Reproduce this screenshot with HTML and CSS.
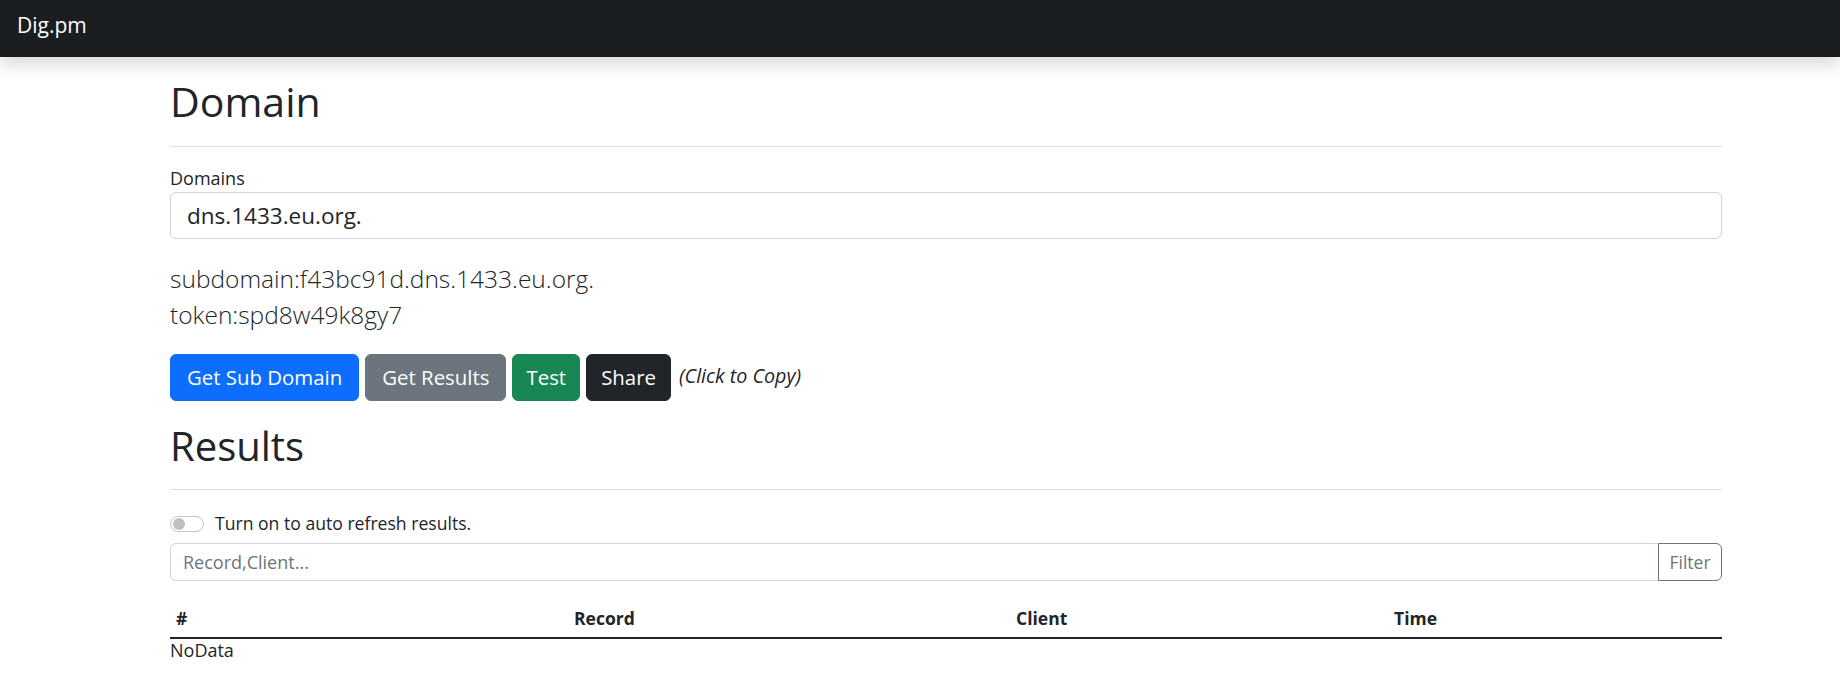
FILE: index.html
```html
<!DOCTYPE html>
<html lang="en">
<head>
<meta charset="utf-8">
<title>Dig.pm</title>
<link rel="stylesheet" href="styles.css">
</head>
<body>
<nav class="navbar"><span class="brand">Dig.pm</span></nav>
<main class="container">
  <h1 class="title">Domain</h1>
  <hr class="rule rule-domain">
  <label class="field-label" for="domains">Domains</label>
  <input class="domain-input" id="domains" type="text" value="dns.1433.eu.org.">
  <div class="lead">subdomain:f43bc91d.dns.1433.eu.org.<br>token:spd8w49k8gy7</div>
  <div class="actions">
    <button class="btn btn-primary">Get Sub Domain</button>
    <button class="btn btn-secondary">Get Results</button>
    <button class="btn btn-success btn-narrow">Test</button>
    <button class="btn btn-dark btn-share">Share</button>
    <span class="copy-hint">(Click to Copy)</span>
  </div>
  <h1 class="title title-results">Results</h1>
  <hr class="rule rule-results">
  <div class="switch-row">
    <span class="switch"><span class="knob"></span></span>
    <label class="switch-label">Turn on to auto refresh results.</label>
  </div>
  <div class="filter-group">
    <input class="filter-input" type="text" placeholder="Record,Client...">
    <button class="filter-btn">Filter</button>
  </div>
  <table class="results">
    <thead>
      <tr>
        <th class="col-num">#</th>
        <th class="col-record">Record</th>
        <th class="col-client">Client</th>
        <th class="col-time">Time</th>
      </tr>
    </thead>
  </table>
  <div class="nodata">NoData</div>
</main>
</body>
</html>
```
FILE: styles.css
```css
* { box-sizing: border-box; }
html, body { margin: 0; padding: 0; }
body {
  font-family: "Open Sans", "Noto Sans", sans-serif;
  font-size: 16px;
  line-height: 24px;
  color: #212529;
  background: #fff;
}
.navbar {
  height: 57px;
  background: #1b1e21;
  padding: 10px 0 0 17px;
  box-shadow: 0 8px 16px rgba(0,0,0,0.15);
  position: relative;
}
.brand {
  color: #fff;
  font-size: 21px;
  line-height: 30px;
  display: inline-block;
}
.container {
  width: 1552px;
  margin: 0 0 0 170px;
  padding-top: 20px;
}
.title {
  margin: 0;
  font-size: 41px;
  line-height: 48px;
  font-weight: 400;
}
.title-results { margin-top: 21px; font-size: 40px; }
.rule {
  border: 0;
  border-top: 1px solid #dfdfdf;
  margin: 21px 0 0;
}
.rule-results { margin-top: 19px; }
.field-label {
  display: block;
  margin-top: 19px;
  font-size: 18px;
  line-height: 24px;
}
.domain-input {
  display: block;
  width: 100%;
  margin-top: 2px;
  height: 47px;
  padding: 7px 16px;
  font: inherit;
  font-size: 22.5px;
  line-height: 30px;
  color: #212529;
  border: 1px solid #ced4da;
  border-radius: 6px;
  outline: none;
}
.lead {
  margin-top: 22px;
  font-size: 24.5px;
  line-height: 36px;
  font-weight: 300;
}
.actions {
  margin-top: 21px;
  display: flex;
  align-items: center;
  gap: 6px;
}
.btn {
  font: inherit;
  font-size: 20.4px;
  line-height: 30px;
  padding: 7px 16px 8px;
  border: 1px solid transparent;
  border-radius: 6px;
  color: #fff;
}
.btn-narrow { padding-left: 13px; padding-right: 13px; }
.btn-share { padding-left: 14px; padding-right: 14px; }
.btn-primary { background: #0d6efd; border-color: #0d6efd; }
.btn-secondary { background: #6c757d; border-color: #6c757d; }
.btn-success { background: #198754; border-color: #198754; }
.btn-dark { background: #212529; border-color: #212529; }
.copy-hint {
  font-style: italic;
  font-size: 19.7px;
  margin-left: 2px;
  margin-top: -3px;
}
.switch-row {
  margin-top: 21px;
  display: flex;
  align-items: center;
  height: 24px;
  font-size: 17.6px;
}
.switch {
  width: 34px;
  height: 16px;
  border: 1px solid #c4c4c4;
  border-radius: 8px;
  position: relative;
  margin-top: 2px;
}
.knob {
  position: absolute;
  left: 2px;
  top: 1px;
  width: 12px;
  height: 12px;
  border-radius: 50%;
  background: #c0c0c0;
}
.switch-label { margin-left: 11px; }
.filter-group {
  margin-top: 8px;
  display: flex;
  height: 38px;
}
.filter-input {
  flex: 1;
  font: inherit;
  font-size: 18px;
  padding: 6px 12px;
  border: 1px solid #ced4da;
  border-radius: 6px 0 0 6px;
  color: #212529;
  outline: none;
}
.filter-input::placeholder { color: #6c757d; }
.filter-btn {
  width: 64px;
  margin-left: -1px;
  font: inherit;
  font-size: 17.5px;
  color: #6c757d;
  background: #fff;
  border: 1px solid #6c757d;
  border-radius: 0 6px 6px 0;
}
.results {
  margin-top: 17px;
  width: 100%;
  border-collapse: collapse;
  table-layout: fixed;
}
.results th {
  text-align: left;
  font-weight: 700;
  font-size: 17.5px;
  padding: 8px 6px 7px;
  border-bottom: 2px solid #212529;
}
.col-num { width: 398px; }
.col-record { width: 442px; }
.col-client { width: 378px; }
.col-time { width: 334px; }
.nodata { line-height: 22px; font-size: 18px; margin-top: 0; }
```
